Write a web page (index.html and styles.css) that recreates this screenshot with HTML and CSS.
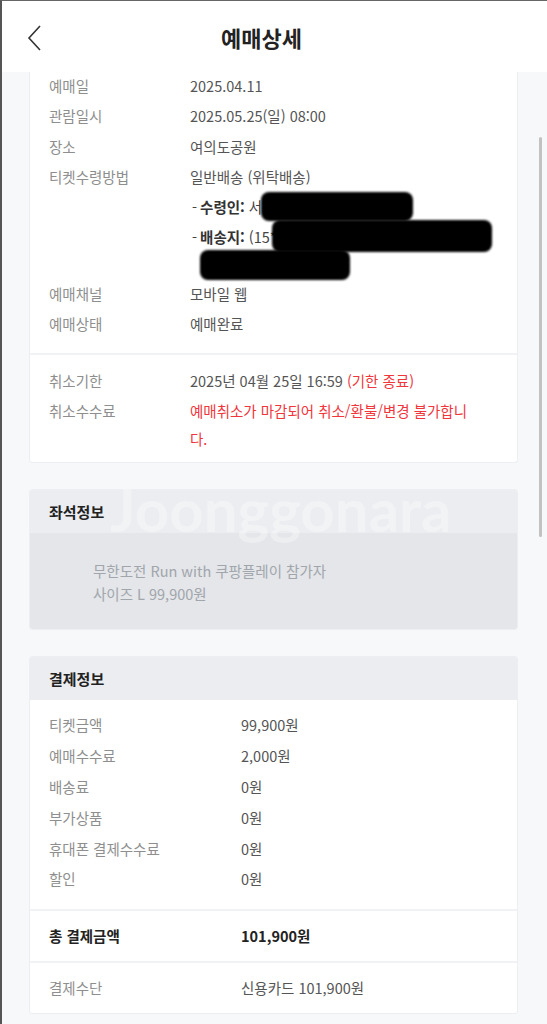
FILE: index.html
```html
<!DOCTYPE html>
<html lang="ko">
<head>
    <meta charset="UTF-8">
    <meta name="viewport" content="width=device-width, initial-scale=1.0">
    <title>예매상세</title>
    <link rel="stylesheet" href="styles.css">
</head>
<body>

    <div class="screen">
        <!-- Header -->
        <div class="header">
            <svg class="back" width="16" height="28" viewBox="0 0 16 28">
                <polyline points="13,2 2,14 13,26" fill="none" stroke="#333" stroke-width="1.6"/>
            </svg>
            <h1>예매상세</h1>
        </div>

        <div class="content">

            <!-- Booking info -->
            <div class="card card-top">
                <div class="section first">
                    <div class="row">
                        <div class="label">예매일</div>
                        <div class="value">2025.04.11</div>
                    </div>
                    <div class="row">
                        <div class="label">관람일시</div>
                        <div class="value">2025.05.25(일) 08:00</div>
                    </div>
                    <div class="row">
                        <div class="label">장소</div>
                        <div class="value">여의도공원</div>
                    </div>
                    <div class="row">
                        <div class="label">티켓수령방법</div>
                        <div class="value delivery">
                            <div>일반배송 (위탁배송)</div>
                            <div class="sub"><span class="dash">-</span><b>수령인:</b> 서**</div>
                            <div class="sub addr"><span class="dash">-</span><b>배송지:</b> (15***)<br><span class="cont">1**</span></div>
                            <div class="redact r1"></div>
                            <div class="redact r2"></div>
                            <div class="redact r3"></div>
                        </div>
                    </div>
                    <div class="row">
                        <div class="label">예매채널</div>
                        <div class="value">모바일 웹</div>
                    </div>
                    <div class="row">
                        <div class="label">예매상태</div>
                        <div class="value">예매완료</div>
                    </div>
                </div>
                <div class="section cancel">
                    <div class="row">
                        <div class="label">취소기한</div>
                        <div class="value">2025년 04월 25일 16:59 <span class="red">(기한 종료)</span></div>
                    </div>
                    <div class="row">
                        <div class="label">취소수수료</div>
                        <div class="value red">예매취소가 마감되어 취소/환불/변경 불가합니다.</div>
                    </div>
                </div>
            </div>

            <!-- Seat info -->
            <div class="card">
                <div class="card-title">좌석정보</div>
                <div class="seat-body">
                    무한도전 Run with 쿠팡플레이 참가자<br>
                    사이즈 L 99,900원
                </div>
            </div>

            <!-- Payment info -->
            <div class="card pay">
                <div class="card-title">결제정보</div>
                <div class="section pay-list">
                    <div class="row"><div class="label">티켓금액</div><div class="value">99,900원</div></div>
                    <div class="row"><div class="label">예매수수료</div><div class="value">2,000원</div></div>
                    <div class="row"><div class="label">배송료</div><div class="value">0원</div></div>
                    <div class="row"><div class="label">부가상품</div><div class="value">0원</div></div>
                    <div class="row"><div class="label">휴대폰 결제수수료</div><div class="value">0원</div></div>
                    <div class="row"><div class="label">할인</div><div class="value">0원</div></div>
                </div>
                <div class="section total">
                    <div class="row"><div class="label">총 결제금액</div><div class="value">101,900원</div></div>
                </div>
                <div class="section method">
                    <div class="row"><div class="label">결제수단</div><div class="value">신용카드 101,900원</div></div>
                </div>
            </div>

        </div>

        <div class="watermark">Joonggonara</div>
        <div class="scrollbar"></div>
    </div>

</body>
</html>
```

FILE: styles.css
```css
body {
    margin: 0;
    background-color: #f6f8fa;
    font-family: "Noto Sans CJK KR", "Noto Sans", sans-serif;
    font-size: 14.5px;
}
.screen {
    position: relative;
    height: 1023px;
    overflow: hidden;
    border-left: 2px solid #555;
    border-top: 1px solid #666;
}
.header {
    position: relative;
    height: 71px;
    padding-right: 26px;
    background-color: #fff;
    display: flex;
    align-items: center;
    justify-content: center;
}
.header h1 {
    margin: 0;
    font-size: 22px;
    font-weight: bold;
    color: #222;
}
.back {
    position: absolute;
    left: 25px;
    top: 23px;
}
.content {
    padding: 0 29px 0 27px;
}
.card {
    background-color: #fff;
    border: 1px solid #eceef1;
    border-radius: 3px;
    margin-top: 26px;
    overflow: hidden;
}
.card-top {
    margin-top: 0;
    border-top: none;
    border-radius: 0 0 3px 3px;
}
.section {
    padding: 11px 36px 11px 19px;
    display: flex;
    flex-direction: column;
    gap: 2.3px;
}
.section.first {
    padding-top: 0;
    padding-bottom: 15px;
    border-bottom: 2px solid #f0f2f5;
}
.section.cancel {
    padding-top: 12px;
    padding-bottom: 9px;
}
.row {
    display: flex;
    line-height: 28px;
}
.label {
    width: 141px;
    flex-shrink: 0;
    color: #8e8e8e;
}
.value {
    color: #555;
}
.red {
    color: #f0353b;
}
.delivery {
    position: relative;
    display: flex;
    flex-direction: column;
    gap: 2.3px;
}
.sub {
    color: #444;
}
.sub b {
    color: #333;
}
.dash {
    margin: 0 3px 0 2px;
}
.addr {
    line-height: 27px;
}
.cont {
    padding-left: 12px;
}
.redact {
    position: absolute;
    background-color: #000;
    border-radius: 8px;
    filter: blur(1.2px);
}
.r1 { left: 71px; top: 29px; width: 152px; height: 29px; }
.r2 { left: 82px; top: 57px; width: 220px; height: 32px; }
.r3 { left: 10px; top: 87px; width: 150px; height: 30px; }

.card-title {
    height: 43px;
    line-height: 43px;
    padding-left: 19px;
    background-color: #ecedf1;
    font-size: 15px;
    font-weight: bold;
    color: #222;
}
.seat-body {
    background-color: #e4e6e9;
    padding: 26px 20px 24px 63px;
    line-height: 23px;
    color: #a1a5ac;
}
.pay .label {
    width: 192px;
}
.pay-list {
    gap: 2.8px;
    padding-bottom: 16px;
    border-bottom: 2px solid #f0f2f5;
}
.total {
    border-bottom: 2px solid #f0f2f5;
}
.total .label,
.total .value {
    color: #222;
    font-weight: bold;
}
.watermark {
    position: absolute;
    left: 108px;
    top: 472px;
    font-family: Lato, sans-serif;
    font-size: 60px;
    font-weight: bold;
    color: rgba(255, 255, 255, 0.33);
    pointer-events: none;
}
.scrollbar {
    position: absolute;
    right: 5px;
    top: 136px;
    width: 3px;
    height: 400px;
    background-color: #c2c2c2;
    border-radius: 2px;
}
```
